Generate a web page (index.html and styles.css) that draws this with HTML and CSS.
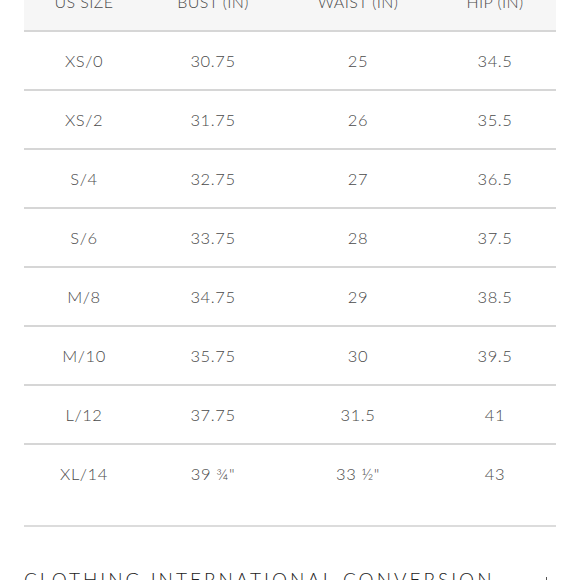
FILE: index.html
```html
<!DOCTYPE html>
<html>
<head>
<meta charset="utf-8">
<link rel="stylesheet" href="styles.css">
</head>
<body>
<div class="page">
  <div class="chart">
    <div class="row head">
      <div>US SIZE</div><div>BUST (IN)</div><div>WAIST (IN)</div><div>HIP (IN)</div>
    </div>
    <div class="row"><div>XS/0</div><div>30.75</div><div>25</div><div>34.5</div></div>
    <div class="row"><div>XS/2</div><div>31.75</div><div>26</div><div>35.5</div></div>
    <div class="row"><div>S/4</div><div>32.75</div><div>27</div><div>36.5</div></div>
    <div class="row"><div>S/6</div><div>33.75</div><div>28</div><div>37.5</div></div>
    <div class="row"><div>M/8</div><div>34.75</div><div>29</div><div>38.5</div></div>
    <div class="row"><div>M/10</div><div>35.75</div><div>30</div><div>39.5</div></div>
    <div class="row"><div>L/12</div><div>37.75</div><div>31.5</div><div>41</div></div>
    <div class="row last"><div>XL/14</div><div>39 ¾"</div><div>33 ½"</div><div>43</div></div>
  </div>
  <div class="section">
    <h2 class="title">CLOTHING INTERNATIONAL CONVERSION</h2>
    <span class="plus"></span>
  </div>
</div>
</body>
</html>
```

FILE: styles.css
```css
html, body {
  margin: 0;
  padding: 0;
  background: #fff;
  overflow: hidden;
}
body {
  font-family: "Lato", "Roboto", sans-serif;
  font-weight: 300;
  color: #4a4a4a;
}
.page {
  width: 532px;
  margin: 0 0 0 24px;
}
.chart {
  margin-top: -27px;
  border-bottom: 2px solid #dcdcdc;
  padding-bottom: 23px;
}
.row {
  display: grid;
  grid-template-columns: 120px 138px 152px 122px;
  height: 57px;
  align-items: center;
  text-align: center;
  font-size: 16.5px;
  letter-spacing: 0.6px;
  border-bottom: 2px solid #d6d6d6;
}
.row.head {
  background: #f6f6f6;
  font-size: 16px;
  letter-spacing: 0.4px;
}
.row.last {
  border-bottom: none;
}
.section {
  display: flex;
  justify-content: space-between;
  align-items: flex-start;
  margin-top: 41px;
}
.title {
  margin: 0;
  font-weight: 300;
  font-size: 19px;
  line-height: 24px;
  letter-spacing: 3px;
  color: #222;
  white-space: nowrap;
}
.plus {
  position: relative;
  width: 12px;
  height: 12px;
  margin-top: 9px;
  margin-right: 3px;
}
.plus::before {
  content: "";
  position: absolute;
  left: 5px;
  top: 0;
  width: 1px;
  height: 12px;
  background: #555;
}
.plus::after {
  content: "";
  position: absolute;
  left: 0;
  top: 5px;
  width: 12px;
  height: 1px;
  background: #555;
}
```
